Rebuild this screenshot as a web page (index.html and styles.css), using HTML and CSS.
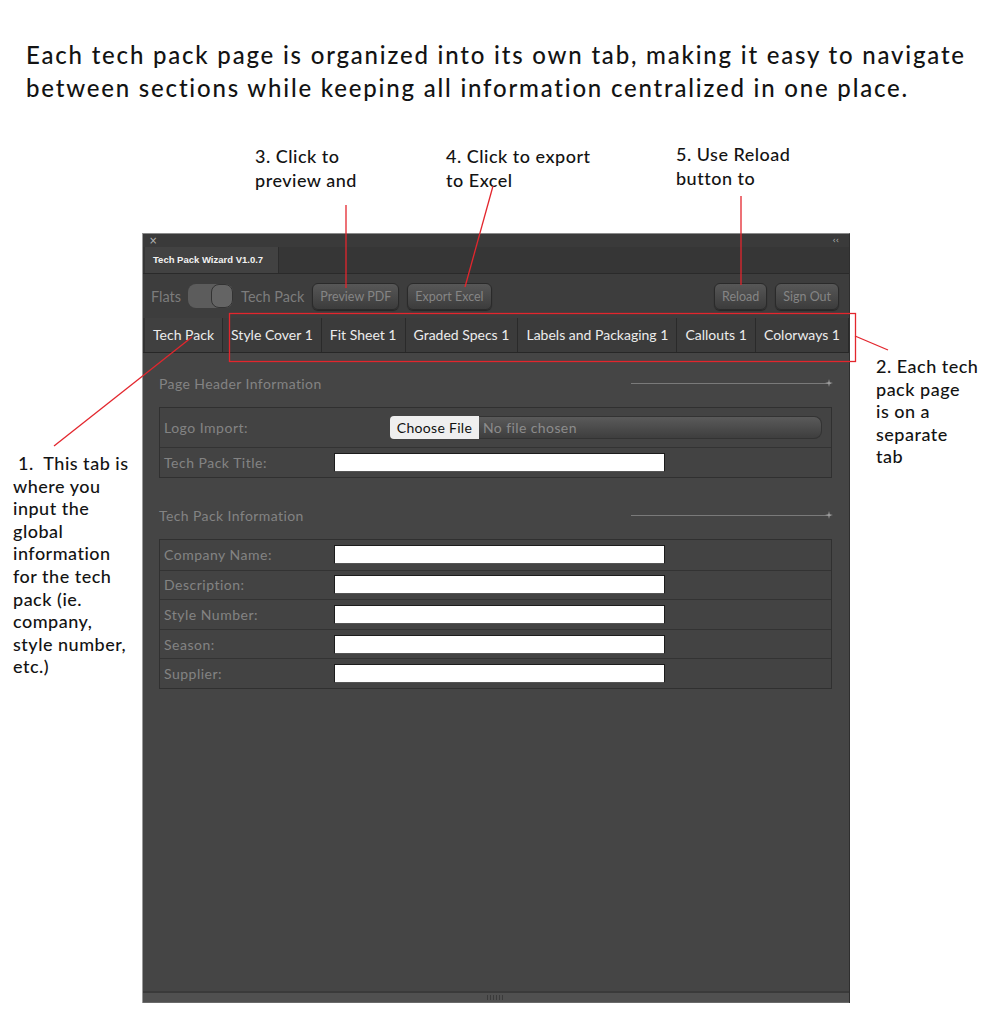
FILE: index.html
```html
<!DOCTYPE html>
<html lang="en">
<head>
    <meta charset="UTF-8">
    <meta name="viewport" content="width=device-width, initial-scale=1.0">
    <title>Tech Pack Wizard</title>
    <link rel="stylesheet" href="styles.css">
</head>
<body>
<div class="page">
    <h1 class="intro">Each tech pack page is organized into its own tab, making it easy to navigate<br>between sections while keeping all information centralized in one place.</h1>

    <div class="top-notes">
        <p class="note note-3">3. Click to<br>preview and</p>
        <p class="note note-4">4. Click to export<br>to Excel</p>
        <p class="note note-5">5. Use Reload<br>button to</p>
    </div>

    <div class="main">
        <div class="side side-left">
            <p class="note">&nbsp;1.&nbsp; This tab is<br>where you<br>input the<br>global<br>information<br>for the tech<br>pack (ie.<br>company,<br>style number,<br>etc.)</p>
        </div>

        <div class="panel">
            <div class="strip">
                <span class="close">&times;</span>
                <span class="collapse">&lsaquo;&lsaquo;</span>
            </div>
            <div class="wintabs">
                <div class="wintab">Tech Pack Wizard V1.0.7</div>
            </div>
            <div class="toolbar">
                <span class="lbl">Flats</span>
                <span class="toggle"><span class="knob"></span></span>
                <span class="lbl">Tech Pack</span>
                <span class="btn">Preview PDF</span>
                <span class="btn">Export Excel</span>
                <span class="spacer"></span>
                <span class="btn">Reload</span>
                <span class="btn">Sign Out</span>
            </div>
            <div class="tabs">
                <div class="tab active">Tech Pack</div>
                <div class="tab">Style Cover 1</div>
                <div class="tab">Fit Sheet 1</div>
                <div class="tab">Graded Specs 1</div>
                <div class="tab">Labels and Packaging 1</div>
                <div class="tab">Callouts 1</div>
                <div class="tab">Colorways 1</div>
            </div>

            <div class="content">
                <div class="section-head">
                    <span>Page Header Information</span>
                    <span class="rule"><svg class="spark" width="8" height="8" viewBox="0 0 8 8"><path d="M4 0 L4.7 3.3 L8 4 L4.7 4.7 L4 8 L3.3 4.7 L0 4 L3.3 3.3Z"/></svg></span>
                </div>
                <div class="table">
                    <div class="row tall">
                        <span class="label">Logo Import:</span>
                        <div class="file">
                            <span class="file-btn">Choose File</span>
                            <span class="file-name">No file chosen</span>
                        </div>
                    </div>
                    <div class="row">
                        <span class="label">Tech Pack Title:</span>
                        <span class="field"></span>
                    </div>
                </div>

                <div class="section-head second">
                    <span>Tech Pack Information</span>
                    <span class="rule"><svg class="spark" width="8" height="8" viewBox="0 0 8 8"><path d="M4 0 L4.7 3.3 L8 4 L4.7 4.7 L4 8 L3.3 4.7 L0 4 L3.3 3.3Z"/></svg></span>
                </div>
                <div class="table info">
                    <div class="row"><span class="label">Company Name:</span><span class="field"></span></div>
                    <div class="row"><span class="label">Description:</span><span class="field"></span></div>
                    <div class="row"><span class="label">Style Number:</span><span class="field"></span></div>
                    <div class="row"><span class="label">Season:</span><span class="field"></span></div>
                    <div class="row"><span class="label">Supplier:</span><span class="field"></span></div>
                </div>
            </div>

            <div class="grip-bar"><span class="grip"></span></div>
        </div>

        <div class="side side-right">
            <p class="note">2. Each tech<br>pack page<br>is on a<br>separate<br>tab</p>
        </div>
    </div>

    <!-- callout lines -->
    <svg class="marks" width="996" height="1024" viewBox="0 0 996 1024">
        <line x1="346" y1="205" x2="346" y2="288"/>
        <line x1="493" y1="186" x2="465" y2="287"/>
        <line x1="741" y1="196" x2="741" y2="285"/>
        <rect x="229.5" y="313.5" width="626" height="48"/>
        <line x1="855" y1="336" x2="888" y2="350"/>
        <line x1="192" y1="337" x2="54" y2="446"/>
    </svg>
</div>
</body>
</html>
```

FILE: styles.css
```css
*{
    margin: 0;
    padding: 0;
    box-sizing: border-box;
}
body{
    background-color: #fff;
    font-family: "Lato", "Liberation Sans", sans-serif;
}
.page{
    width: 996px;
    height: 1024px;
    position: relative;
    overflow: hidden;
}
.intro{
    padding: 38px 0 0 26px;
    font-size: 24px;
    line-height: 33px;
    font-weight: 500;
    color: #131313;
    letter-spacing: 1.8px;
    white-space: nowrap;
}
.note{
    font-size: 18px;
    line-height: 22.6px;
    font-weight: 500;
    color: #131313;
    letter-spacing: 0.5px;
    white-space: nowrap;
}

/* notes above the panel */
.top-notes{
    display: flex;
    height: 129px;
    padding-left: 255px;
}
.top-notes .note{
    line-height: 24px;
    margin-top: 40px;
}
.note-3{
    width: 191px;
}
.note-4{
    width: 230px;
}
.top-notes .note-5{
    margin-top: 38px;
}

.main{
    display: flex;
    height: 770px;
}
.side-left{
    width: 142px;
    padding: 219px 0 0 13px;
}
.side-right{
    padding: 122px 0 0 26px;
}

/* panel */
.panel{
    width: 708px;
    display: flex;
    flex-direction: column;
    background-color: #454545;
    border-top: 1px solid #8a8a8a;
    border-left: 1px solid #9a9a9a;
    border-right: 1px solid #2e2e2e;
}
.strip{
    height: 13px;
    background-color: #3a3a3a;
    display: flex;
    justify-content: space-between;
    align-items: center;
    padding: 0 10px 0 6px;
    color: #b5b5b5;
    font-family: "DejaVu Sans", sans-serif;
}
.close{
    font-size: 10px;
    line-height: 10px;
}
.collapse{
    font-size: 8px;
    line-height: 8px;
}
.wintabs{
    height: 27px;
    background-color: #363636;
    border-bottom: 1px solid #2a2a2a;
    padding-left: 2px;
}
.wintab{
    width: 134px;
    height: 26px;
    background-color: #424242;
    border-right: 1px solid #2c2c2c;
    color: #f2f2f2;
    font-family: "Liberation Sans", sans-serif;
    font-size: 9.5px;
    font-weight: bold;
    line-height: 26px;
    padding-left: 8px;
}
.toolbar{
    height: 44px;
    background-color: #3d3d3d;
    display: flex;
    align-items: center;
    gap: 8px;
    padding: 0 10px 0 8px;
}
.lbl{
    color: #7c7c7c;
    font-size: 14.5px;
}
.toggle{
    width: 45px;
    height: 24px;
    border-radius: 8px;
    background-color: #5c5c5c;
    display: flex;
    justify-content: flex-end;
    margin-left: -1px;
}
.knob{
    width: 22px;
    height: 24px;
    border-radius: 8px;
    background-color: #646464;
    border: 1px solid #333;
}
.btn{
    height: 27px;
    line-height: 25px;
    padding: 0 7px;
    border-radius: 6px;
    border: 1px solid #2a2a2a;
    background: linear-gradient(#575757, #3c3c3c);
    color: #858585;
    font-size: 12.5px;
    box-shadow: 0 1px 1px rgba(0, 0, 0, 0.4);
}
.spacer{
    flex: 1;
}
.tabs{
    height: 35px;
    display: flex;
    background-color: #333;
    border-bottom: 1px solid #272727;
    padding-left: 2px;
}
.tab{
    flex: 1 1 auto;
    height: 34px;
    line-height: 34px;
    padding: 0 7.5px;
    background-color: #3b3b3b;
    border-right: 1px solid #2a2a2a;
    color: #ececec;
    font-size: 14px;
    text-align: center;
    white-space: nowrap;
}
.tab.active{
    background-color: #404040;
}

/* content */
.content{
    flex: 1;
    padding: 19px 17px 0 16px;
}
.section-head{
    height: 22px;
    display: flex;
    align-items: center;
    justify-content: space-between;
    color: #838383;
    font-size: 14px;
    letter-spacing: 0.4px;
}
.section-head.second{
    margin-top: 26px;
}
.rule{
    width: 200px;
    height: 1px;
    background-color: #7a7a7a;
    position: relative;
    margin-right: 1px;
}
.spark{
    position: absolute;
    right: -2px;
    top: -4px;
    fill: #a0a0a0;
}
.table{
    margin-top: 13px;
    border: 1px solid #303030;
    background-color: #434343;
}
.row{
    height: 30px;
    display: flex;
    align-items: center;
    border-top: 1px solid #333;
}
.row:first-child{
    border-top: none;
}
.row.tall{
    height: 39px;
}
.info .row{
    height: 29.6px;
}
.label{
    width: 174px;
    padding-left: 4px;
    color: #838383;
    font-size: 14px;
    letter-spacing: 0.5px;
}
.field{
    width: 331px;
    height: 19px;
    background-color: #fff;
    border: 1px solid #1c1c1c;
    border-bottom-color: #555;
}
.file{
    display: flex;
    margin-left: 56px;
    height: 23px;
}
.file-btn{
    width: 89px;
    background-color: #efefef;
    border-radius: 4px 0 0 4px;
    color: #111;
    font-size: 14px;
    letter-spacing: 0.3px;
    line-height: 23px;
    text-align: center;
}
.file-name{
    width: 343px;
    background: linear-gradient(#5a5a5a, #3e3e3e);
    border-radius: 0 8px 8px 0;
    border: 1px solid #333;
    border-left: none;
    color: #8c8c8c;
    font-size: 14px;
    letter-spacing: 0.4px;
    line-height: 21px;
    padding-left: 4px;
}
.grip-bar{
    height: 12px;
    background-color: #505050;
    border-top: 2px solid #3a3a3a;
    border-bottom: 1px solid #6a6a6a;
    display: flex;
    justify-content: center;
    align-items: center;
}
.grip{
    width: 18px;
    height: 5px;
    background: repeating-linear-gradient(90deg, #3a3a3a 0 1px, #505050 1px 3px);
}

.marks{
    position: absolute;
    left: 0;
    top: 0;
    pointer-events: none;
}
.marks line,
.marks rect{
    stroke: #e3262d;
    stroke-width: 1.3;
    fill: none;
}
```
